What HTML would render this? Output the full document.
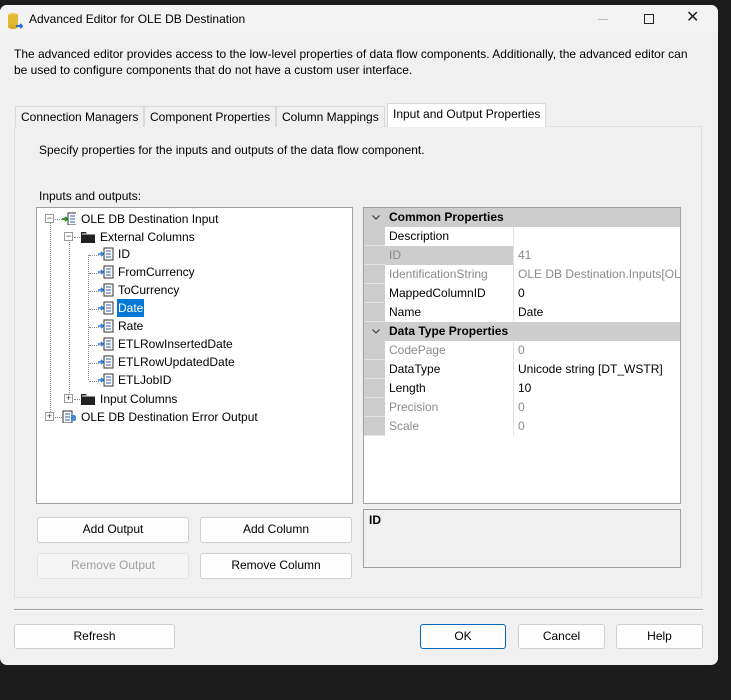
<!DOCTYPE html>
<html><head><meta charset="utf-8"><style>
*{box-sizing:border-box;margin:0;padding:0}
body{width:731px;height:700px;background:#1c1c1c;position:relative;overflow:hidden;font-family:"Liberation Sans",sans-serif;font-size:12px;color:#000}
.a{position:absolute}
.win{left:0;top:5px;width:718px;height:660px;background:#f0f0f0;border-radius:7px;overflow:hidden}
.btn{position:absolute;background:#fdfdfd;border:1px solid #cfcfcf;border-radius:3px;text-align:center;line-height:23px;font-size:12px}
.tab{position:absolute;top:106px;height:21px;border:1px solid #d9d9d9;border-bottom:none;line-height:20px;padding:0 5px;font-size:12px;background:#f0f0f0}
.row{position:absolute;left:0;height:18px;line-height:18px;white-space:nowrap}
.ic{position:absolute;width:14px;height:13px}
.pr{position:absolute;left:0;width:317px;height:19px;border-bottom:1px solid #e3e3e3}
.pr .l{position:absolute;left:21px;width:129px;height:19px;padding-left:4px;line-height:19px;border-right:1px solid #e3e3e3;background:#fff}
.pr .v{position:absolute;left:150px;right:0;height:19px;padding-left:4px;line-height:19px;background:#fff;white-space:nowrap;overflow:hidden}
.g .l,.g .v{color:#8a8a8a}
.hd{position:absolute;left:0;width:317px;height:19px;background:#cdcdcd;font-weight:bold;line-height:19px;padding-left:25px}
.hd svg{position:absolute;left:8px;top:7px}
.pm{position:absolute;width:9px;height:9px;border:1px solid #999;background:#fff;font-size:9px;line-height:7px;text-align:center;color:#333}
.dv{position:absolute;border-left:1px dotted #888}
.dh{position:absolute;border-top:1px dotted #888;height:0}
</style></head><body>
<div class="a win">
 <div class="a" style="left:0;top:0;width:718px;height:28px;background:#f3f3f3"></div>
 <svg class="a" style="left:7px;top:7px" width="16" height="18"><ellipse cx="6" cy="3" rx="5" ry="2" fill="#e8c84a"/><rect x="1" y="3" width="10" height="12" fill="#e2b933"/><ellipse cx="6" cy="15" rx="5" ry="2" fill="#d4a62a"/><path d="M9 14 L15 14 L13 12 M15 14 L13 16" stroke="#2a6fd0" stroke-width="2" fill="none"/></svg>
 <div class="a" style="left:29px;top:7px;font-size:12px">Advanced Editor for OLE DB Destination</div>
 <div class="a" style="left:598px;top:14px;width:10px;border-top:1px solid #bbb"></div>
 <div class="a" style="left:644px;top:9px;width:10px;height:10px;border:1px solid #222"></div>
 <div class="a" style="left:686px;top:2px;font-size:16px;color:#222">✕</div>
 <div class="a" style="left:14px;top:41px;width:684px;line-height:16px">The advanced editor provides access to the low-level properties of data flow components. Additionally, the advanced editor can be used to configure components that do not have a custom user interface.</div>
 <div class="a" style="left:14px;top:121px;width:688px;height:472px;border:1px solid #e0e0e0;background:#f0f0f0"></div>
 <div class="tab" style="left:15px;top:101px">Connection Managers</div>
 <div class="tab" style="left:144px;top:101px">Component Properties</div>
 <div class="tab" style="left:276px;top:101px">Column Mappings</div>
 <div class="tab" style="left:387px;top:98px;height:24px;background:#fff;border-color:#d9d9d9;z-index:2">Input and Output Properties</div>
 <div class="a" style="left:39px;top:138px">Specify properties for the inputs and outputs of the data flow component.</div>
 <div class="a" style="left:39px;top:184px">Inputs and outputs:</div>
 <!-- tree -->
 <div class="a" style="left:36px;top:202px;width:317px;height:297px;background:#fff;border:1px solid #a0a0a0">
  <div class="dv" style="left:13px;top:11px;height:195px"></div>
  <div class="dv" style="left:32px;top:29px;height:158px"></div>
  <div class="dv" style="left:51px;top:47px;height:125px"></div>
  <div class="pm" style="left:8px;top:6px">−</div><div class="dh" style="left:18px;top:11px;width:7px"></div>
  <svg class="ic" style="left:25px;top:4px" width="16" height="14"><path d="M0 7h5M3 5l2 2-2 2" stroke="#2a9a2a" stroke-width="2" fill="none"/><rect x="6" y="1" width="9" height="12" fill="#fff" stroke="#333"/><path d="M8 4h5M8 7h5M8 10h5" stroke="#2b5bb5"/></svg>
  <div class="row" style="left:44px;top:2px">OLE DB Destination Input</div>
  <div class="pm" style="left:27px;top:24px">−</div><div class="dh" style="left:37px;top:29px;width:6px"></div>
  <svg class="ic" style="left:44px;top:22px" width="15" height="13"><path d="M0 2h5l1 2h8v9H0z" fill="#222"/><path d="M1 4h13" stroke="#fff"/></svg>
  <div class="row" style="left:63px;top:20px">External Columns</div>
  <div class="a" style="left:0;top:38px">
   <div class="dh" style="left:52px;top:9px;width:10px"></div><div class="dh" style="left:52px;top:27px;width:10px"></div><div class="dh" style="left:52px;top:45px;width:10px"></div><div class="dh" style="left:52px;top:63px;width:10px"></div><div class="dh" style="left:52px;top:81px;width:10px"></div><div class="dh" style="left:52px;top:99px;width:10px"></div><div class="dh" style="left:52px;top:117px;width:10px"></div><div class="dh" style="left:52px;top:135px;width:10px"></div>
  </div>
  <div class="pm" style="left:27px;top:186px">+</div><div class="dh" style="left:37px;top:191px;width:6px"></div>
  <svg class="ic" style="left:44px;top:184px" width="15" height="13"><path d="M0 2h5l1 2h8v9H0z" fill="#222"/><path d="M1 4h13" stroke="#fff"/></svg>
  <div class="row" style="left:63px;top:182px">Input Columns</div>
  <div class="pm" style="left:8px;top:204px">+</div><div class="dh" style="left:18px;top:209px;width:7px"></div>
  <svg class="ic" style="left:25px;top:202px" width="16" height="14"><rect x="1" y="1" width="9" height="12" fill="#fff" stroke="#333"/><path d="M3 4h5M3 7h5M3 10h5" stroke="#2b5bb5"/><path d="M9 5h4l2 3-2 3H9z" fill="#4a8ad8"/></svg>
  <div class="row" style="left:44px;top:200px">OLE DB Destination Error Output</div>
 </div>
 <!-- grid -->
 <div class="a" style="left:363px;top:202px;width:318px;height:297px;background:#fff;border:1px solid #a0a0a0;overflow:hidden">
  <div class="a" style="left:0;top:0;width:21px;height:228px;background:#cdcdcd"></div>
  <div class="hd" style="top:0"><svg width="8" height="5"><path d="M0.5 0.5L4 4L7.5 0.5" stroke="#333" fill="none"/></svg>Common Properties</div>
  <div class="pr" style="top:19px"><div class="l">Description</div><div class="v"></div></div>
  <div class="pr g" style="top:38px"><div class="l" style="background:#cdcdcd">ID</div><div class="v">41</div></div>
  <div class="pr g" style="top:57px"><div class="l">IdentificationString</div><div class="v">OLE DB Destination.Inputs[OLE DB Destination Input]</div></div>
  <div class="pr" style="top:76px"><div class="l">MappedColumnID</div><div class="v">0</div></div>
  <div class="pr" style="top:95px"><div class="l">Name</div><div class="v">Date</div></div>
  <div class="hd" style="top:114px"><svg width="8" height="5"><path d="M0.5 0.5L4 4L7.5 0.5" stroke="#333" fill="none"/></svg>Data Type Properties</div>
  <div class="pr g" style="top:133px"><div class="l">CodePage</div><div class="v">0</div></div>
  <div class="pr" style="top:152px"><div class="l">DataType</div><div class="v">Unicode string [DT_WSTR]</div></div>
  <div class="pr" style="top:171px"><div class="l">Length</div><div class="v">10</div></div>
  <div class="pr g" style="top:190px"><div class="l">Precision</div><div class="v">0</div></div>
  <div class="pr g" style="top:209px"><div class="l">Scale</div><div class="v">0</div></div>
 </div>
 <div class="a" style="left:363px;top:504px;width:318px;height:59px;border:1px solid #a0a0a0;background:#f0f0f0;font-weight:bold;padding:3px 5px">ID</div>
 <div class="btn" style="left:37px;top:512px;width:152px;height:26px">Add Output</div>
 <div class="btn" style="left:200px;top:512px;width:152px;height:26px">Add Column</div>
 <div class="btn" style="left:37px;top:548px;width:152px;height:26px;color:#a0a0a0;background:#f5f5f5;border-color:#e3e3e3">Remove Output</div>
 <div class="btn" style="left:200px;top:548px;width:152px;height:26px">Remove Column</div>
 <div class="a" style="left:14px;top:604px;width:689px;border-top:1px solid #a0a0a0;border-bottom:1px solid #fff"></div>
 <div class="btn" style="left:14px;top:619px;width:161px;height:25px">Refresh</div>
 <div class="btn" style="left:420px;top:619px;width:86px;height:25px;border-color:#0067c0">OK</div>
 <div class="btn" style="left:518px;top:619px;width:87px;height:25px">Cancel</div>
 <div class="btn" style="left:616px;top:619px;width:87px;height:25px">Help</div>
</div>
<div class="a" style="left:36px;top:207px">
 <svg class="ic" style="left:62px;top:40px;width:16px;height:148px" width="16" height="148">
  <g id="c"><path d="M0 7h5M3 5l2 2-2 2" stroke="#2b7de0" stroke-width="1.6" fill="none"/><rect x="6" y="1" width="9" height="12" fill="#fff" stroke="#333"/><path d="M8 4h5M8 7h5M8 10h5" stroke="#2b5bb5"/></g>
  <use href="#c" y="18"/><use href="#c" y="36"/><use href="#c" y="54"/><use href="#c" y="72"/><use href="#c" y="90"/><use href="#c" y="108"/><use href="#c" y="126"/>
 </svg>
 <div class="row" style="left:82px;top:38px">ID</div>
 <div class="row" style="left:82px;top:56px">FromCurrency</div>
 <div class="row" style="left:82px;top:74px">ToCurrency</div>
 <div class="row" style="left:81px;top:92px;background:#0078d7;color:#fff;padding:0 1px">Date</div>
 <div class="row" style="left:82px;top:110px">Rate</div>
 <div class="row" style="left:82px;top:128px">ETLRowInsertedDate</div>
 <div class="row" style="left:82px;top:146px">ETLRowUpdatedDate</div>
 <div class="row" style="left:82px;top:164px">ETLJobID</div>
</div>
</body></html>
